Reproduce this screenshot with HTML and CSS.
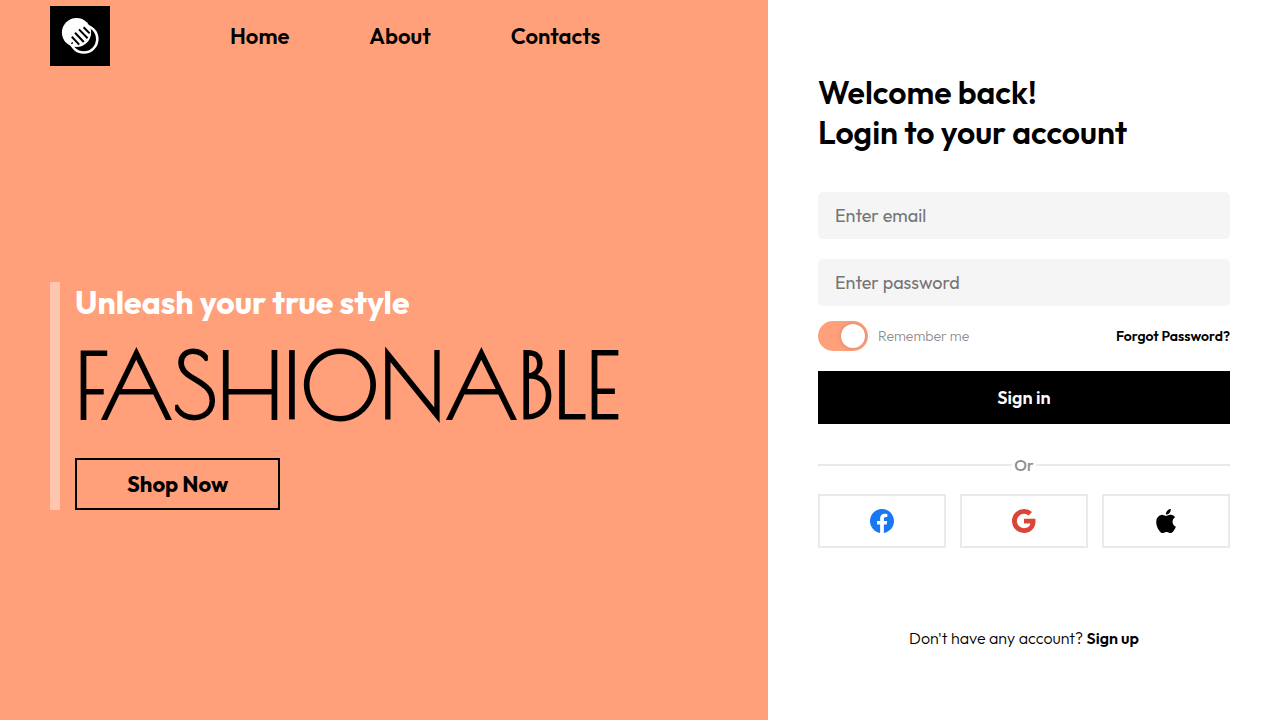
FILE: index.html
```html
<!DOCTYPE html>
<html lang="en">
<head>
<meta charset="utf-8">
<meta name="viewport" content="width=device-width, initial-scale=1">
<title>Login</title>
<link rel="stylesheet" href="styles.css">
</head>
<body>
<div class="page">
  <section class="showcase">
    <header class="topbar">
      <a class="logo" href="#" aria-label="Homepage">
        <svg viewBox="0 0 60 60" aria-hidden="true">
          <circle cx="33.8" cy="33" r="13.5" fill="#000" stroke="#fff" stroke-width="2.6"/>
          <circle cx="26.5" cy="26.5" r="14.6" fill="#fff"/>
          <path d="M21.8 30.8l7.4 7.8M25 26.8l8.8 9.2M29 23.4l8.6 8.8M33.6 21.2l6 6.2M21.6 36.6l1 1" stroke="#000" stroke-width="2" fill="none"/>
        </svg>
      </a>
      <nav>
        <ul class="menu">
          <li><a href="#">Home</a></li>
          <li><a href="#">About</a></li>
          <li><a href="#">Contacts</a></li>
        </ul>
      </nav>
    </header>
    <main class="hero">
      <div class="pitch">
        <h2 class="tagline">Unleash your true style</h2>
        <p class="headline">FASHIONABLE</p>
        <button class="shop" type="button">Shop Now</button>
      </div>
    </main>
  </section>
  <section class="login">
    <h1 class="welcome">Welcome back!<br>Login to your account</h1>
    <form class="form">
      <input class="field" type="email" placeholder="Enter email" aria-label="Email">
      <input class="field" type="password" placeholder="Enter password" aria-label="Password">
      <div class="options">
        <label class="remember"><input class="switch" type="checkbox" checked>Remember me</label>
        <a class="forgot" href="#">Forgot Password?</a>
      </div>
      <button class="signin" type="submit">Sign in</button>
    </form>
    <div class="divider">Or</div>
    <div class="socials">
      <button class="social" type="button" aria-label="Sign in with Facebook">
        <svg viewBox="0 0 16 16" fill="#1877f2" aria-hidden="true"><path d="M16 8.049c0-4.446-3.582-8.05-8-8.05C3.58 0-.002 3.603-.002 8.05c0 4.017 2.926 7.347 6.75 7.951v-5.625h-2.03V8.05H6.75V6.275c0-2.017 1.195-3.131 3.022-3.131.876 0 1.791.157 1.791.157v1.98h-1.009c-.993 0-1.303.621-1.303 1.258v1.51h2.218l-.354 2.326H9.25V16c3.824-.604 6.75-3.934 6.75-7.951z"/></svg>
      </button>
      <button class="social" type="button" aria-label="Sign in with Google">
        <svg viewBox="0 0 16 16" fill="#db4437" aria-hidden="true"><path d="M15.545 6.558a9.42 9.42 0 0 1 .139 1.626c0 2.434-.87 4.492-2.384 5.885h.002C11.978 15.292 10.158 16 8 16A8 8 0 1 1 8 0a7.689 7.689 0 0 1 5.352 2.082l-2.284 2.284A4.347 4.347 0 0 0 8 3.166c-2.087 0-3.86 1.408-4.492 3.304a4.792 4.792 0 0 0 0 3.063h.003c.635 1.893 2.405 3.301 4.492 3.301 1.078 0 2.004-.276 2.722-.764h-.003a3.702 3.702 0 0 0 1.599-2.431H8v-3.08h7.545z"/></svg>
      </button>
      <button class="social" type="button" aria-label="Sign in with Apple">
        <svg viewBox="0 0 16 16" fill="#000" aria-hidden="true"><path d="M11.182.008C11.148-.03 9.923.023 8.857 1.18c-1.066 1.156-.902 2.482-.878 2.516.024.034 1.52.087 2.475-1.258.955-1.345.762-2.391.728-2.43zm3.314 11.733c-.048-.096-2.325-1.234-2.113-3.422.212-2.189 1.675-2.789 1.698-2.854.023-.065-.597-.79-1.254-1.157a3.692 3.692 0 0 0-1.563-.434c-.108-.003-.483-.095-1.254.116-.508.139-1.653.589-1.968.607-.316.018-1.256-.522-2.267-.665-.647-.125-1.333.131-1.824.328-.49.196-1.422.754-2.074 2.237-.652 1.482-.311 3.83-.067 4.56.244.729.625 1.924 1.273 2.796.576.984 1.34 1.667 1.659 1.899.319.232 1.219.386 1.843.067.502-.308 1.408-.485 1.766-.472.357.013 1.061.154 1.782.539.571.197 1.111.115 1.652-.105.541-.221 1.324-1.059 2.238-2.758.347-.79.505-1.217.473-1.282z"/></svg>
      </button>
    </div>
    <p class="signup">Don't have any account? <a href="#">Sign up</a></p>
  </section>
</div>
</body>
</html>
```
FILE: styles.css
```css
* {
  box-sizing: border-box;
  margin: 0;
  padding: 0;
}

body {
  font-family: Outfit, Lato, sans-serif;
  color: #000;
  background: #fff;
}

a {
  color: inherit;
  text-decoration: none;
}

button,
input {
  font: inherit;
}

button {
  cursor: pointer;
}

.page {
  display: grid;
  grid-template-columns: 3fr 2fr;
  min-height: 100vh;
}

.showcase {
  display: flex;
  flex-direction: column;
  background: #ffa07a;
}

.topbar {
  display: flex;
  align-items: center;
  gap: 120px;
  padding: 6px 50px;
}

.logo {
  display: flex;
  width: 60px;
  height: 60px;
  background: #000;
}

.menu {
  display: flex;
  gap: 80px;
  list-style: none;
  font-size: 22px;
  font-weight: 600;
}

.hero {
  display: flex;
  flex: 1;
  align-items: center;
  padding: 0 50px;
}

.pitch {
  border-left: 10px solid rgba(255, 255, 255, 0.4);
  padding-left: 15px;
}

.tagline {
  font-size: 32px;
  font-weight: 700;
  line-height: 40px;
  color: #fff;
}

.headline {
  font-family: "Poiret One", Lato, sans-serif;
  font-size: 89px;
  font-weight: 700;
  line-height: 126px;
  margin-bottom: 10px;
}

.shop {
  display: block;
  padding: 0 50px;
  border: 2px solid #000;
  background: transparent;
  font-size: 22px;
  font-weight: 700;
  line-height: 48px;
}

.login {
  display: flex;
  flex-direction: column;
  justify-content: center;
  padding: 0 50px;
}

.welcome {
  font-size: 32px;
  font-weight: 600;
  line-height: 40px;
  margin-bottom: 40px;
}

.form {
  display: flex;
  flex-direction: column;
}

.field {
  width: 100%;
  margin-bottom: 20px;
  padding: 0 17px;
  border: 0;
  border-radius: 5px;
  background: #f5f5f5;
  font-size: 18px;
  font-weight: 400;
  line-height: 23px;
  height: 47px;
}

.field::placeholder {
  color: #757575;
}

.options {
  display: flex;
  align-items: center;
  justify-content: space-between;
  margin: -5px 0 20px;
  font-size: 14px;
}

.remember {
  display: flex;
  align-items: center;
  gap: 10px;
  color: #8d8d8d;
  font-weight: 300;
}

.switch {
  appearance: none;
  display: flex;
  width: 50px;
  height: 30px;
  padding: 3px;
  border-radius: 15px;
  background: #ccc;
}

.switch::before {
  content: "";
  width: 24px;
  height: 24px;
  border-radius: 50%;
  background: #fff;
  box-shadow: 0 0 5px rgba(0, 0, 0, 0.2);
}

.switch:checked {
  justify-content: flex-end;
  background: #ffa07a;
}

.forgot {
  font-weight: 600;
}

.signin {
  border: 0;
  background: #000;
  color: #fff;
  font-size: 18px;
  font-weight: 600;
  line-height: 53px;
}

.divider {
  display: flex;
  align-items: center;
  gap: 2px;
  margin: 31px 0 19px;
  color: #8d8d8d;
  font-size: 16px;
  font-weight: 500;
  line-height: 20px;
}

.divider::before,
.divider::after {
  content: "";
  flex: 1;
  height: 2px;
  background: #eaeaea;
}

.socials {
  display: flex;
  gap: 14px;
}

.social {
  display: flex;
  flex: 1;
  justify-content: center;
  padding: 13px;
  border: 2px solid #eaeaea;
  background: #fff;
}

.social svg {
  width: 24px;
  height: 24px;
}

.signup {
  margin-top: 80px;
  font-size: 16px;
  font-weight: 300;
  line-height: 21px;
  text-align: center;
}

.signup a {
  font-weight: 600;
}
```
